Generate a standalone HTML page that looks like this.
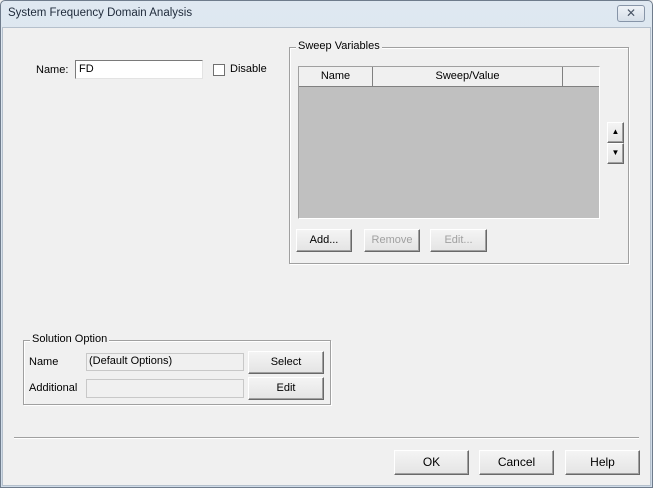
<!DOCTYPE html><html><head><style>
*{box-sizing:border-box;margin:0;padding:0}
body{width:653px;height:488px;overflow:hidden;font-family:"Liberation Sans",Arial,sans-serif;font-size:11px;color:#000;background:#f0f0f0;position:relative}
.a{position:absolute}
.win{left:0;top:0;width:653px;height:488px;border:1px solid #6f7c8c;border-radius:5px 5px 0 0;background:linear-gradient(#dfe8f1,#cfdbe8)}
.inner{left:2px;top:27px;width:649px;height:459px;background:#f0f0f0;border:1px solid #b5c0cc}
.btn{position:absolute;background:linear-gradient(#f4f4f4,#e4e4e4);border:1px solid #fff;border-right-color:#696969;border-bottom-color:#696969;box-shadow:inset -1px -1px 0 #a0a0a0;text-align:center;font-size:11px}
.grp{position:absolute;border:1px solid #a0a0a0;box-shadow:inset 1px 1px 0 #fff, 1px 1px 0 #fff}
.lg{position:absolute;background:#f0f0f0;padding:0 2px;font-size:11px}
.tb{position:absolute;border:1px solid #c8c8c8;background:#f0f0f0}
</style></head><body>
<div class="a win"></div>
<div class="a" style="left:8px;top:7px;font-size:11.5px;color:#1e2a3a">System Frequency Domain Analysis</div>
<div class="a" style="left:617px;top:5px;width:28px;height:17px;border:1px solid #8795a8;border-radius:3px;background:linear-gradient(#eef2f7,#d6dfe9);text-align:center;font-size:12px;line-height:14px;color:#4a5566">✕</div>
<div class="a inner"></div>

<div class="a" style="left:36px;top:64px">Name:</div>
<div class="a" style="left:75px;top:60px;width:128px;height:19px;border:1px solid #7a7a7a;border-right-color:#e3e3e3;border-bottom-color:#e3e3e3;background:#fff;padding:2px 0 0 3px">FD</div>
<div class="a" style="left:213px;top:64px;width:12px;height:12px;border:1px solid #707070;background:#fff"></div>
<div class="a" style="left:230px;top:63px">Disable</div>

<div class="grp" style="left:289px;top:47px;width:340px;height:217px"></div>
<div class="lg" style="left:296px;top:40px">Sweep Variables</div>
<div class="a" style="left:298px;top:66px;width:302px;height:153px;border:1px solid #a0a0a0;border-right-color:#fff;border-bottom-color:#fff;background:#c0c0c0"></div>
<div class="a" style="left:299px;top:67px;width:300px;height:20px;background:#f0f0f0;border-bottom:1px solid #808080"></div>
<div class="a" style="left:299px;top:67px;width:74px;height:20px;border-right:1px solid #808080;text-align:center;line-height:18px">Name</div>
<div class="a" style="left:373px;top:67px;width:190px;height:20px;border-right:1px solid #808080;text-align:center;line-height:18px">Sweep/Value</div>
<div class="btn" style="left:607px;top:122px;width:17px;height:21px;font-size:8px;line-height:18px">▲</div>
<div class="btn" style="left:607px;top:143px;width:17px;height:21px;font-size:8px;line-height:18px">▼</div>
<div class="btn" style="left:296px;top:229px;width:56px;height:23px;line-height:20px">Add...</div>
<div class="btn" style="left:364px;top:229px;width:56px;height:23px;line-height:20px;color:#a0a0a0">Remove</div>
<div class="btn" style="left:430px;top:229px;width:57px;height:23px;line-height:20px;color:#a0a0a0">Edit...</div>

<div class="grp" style="left:23px;top:340px;width:308px;height:65px"></div>
<div class="lg" style="left:30px;top:333px">Solution Option</div>
<div class="a" style="left:29px;top:356px">Name</div>
<div class="a" style="left:29px;top:382px">Additional</div>
<div class="tb" style="left:86px;top:353px;width:158px;height:18px;padding:1px 0 0 2px">(Default Options)</div>
<div class="tb" style="left:86px;top:379px;width:158px;height:19px"></div>
<div class="btn" style="left:248px;top:351px;width:76px;height:23px;line-height:20px">Select</div>
<div class="btn" style="left:248px;top:377px;width:76px;height:23px;line-height:20px">Edit</div>

<div class="a" style="left:14px;top:437px;width:625px;height:2px;border-top:1px solid #a0a0a0;border-bottom:1px solid #fff"></div>
<div class="btn" style="left:394px;top:450px;width:75px;height:25px;line-height:22px;font-size:12px">OK</div>
<div class="btn" style="left:479px;top:450px;width:75px;height:25px;line-height:22px;font-size:12px">Cancel</div>
<div class="btn" style="left:565px;top:450px;width:75px;height:25px;line-height:22px;font-size:12px">Help</div>
</body></html>
